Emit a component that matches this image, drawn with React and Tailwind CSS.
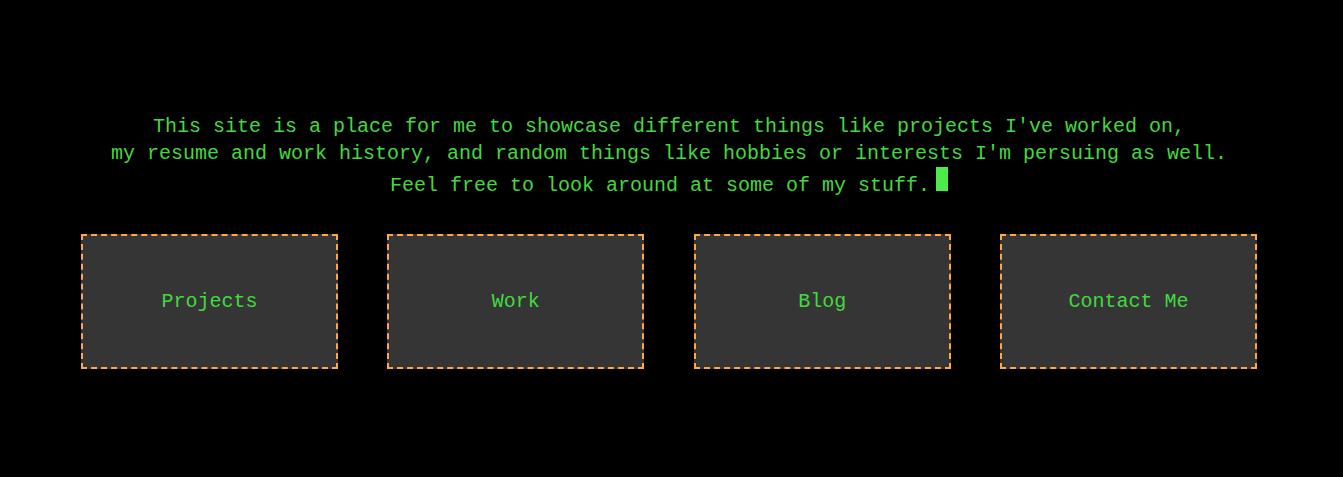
export default function App() {
  const links = ['Projects', 'Work', 'Blog', 'Contact Me'];
  return (
    <div className="min-h-[477px] w-full bg-black font-['Liberation_Mono',monospace] text-[20px] text-[#42d93f]">
      <div className="w-[1338px] pt-[113px]">
        <p className="text-center leading-[27px]">
          This site is a place for me to showcase different things like projects I've worked on,
          <br />
          my resume and work history, and random things like hobbies or interests I'm persuing as well.
          <br />
          Feel free to look around at some of my stuff.
          <span className="ml-[6px] inline-block h-[24px] w-[12px] bg-[#4deb4a]" />
        </p>
        <div className="mt-[35px] grid grid-cols-4 gap-x-[49.3px] px-[81px]">
          {links.map(label => (
            <a
              key={label}
              className="flex h-[135px] items-center justify-center border-2 border-dashed border-[#ffa647] bg-[#353535] leading-[27px]"
            >
              {label}
            </a>
          ))}
        </div>
      </div>
    </div>
  );
}
